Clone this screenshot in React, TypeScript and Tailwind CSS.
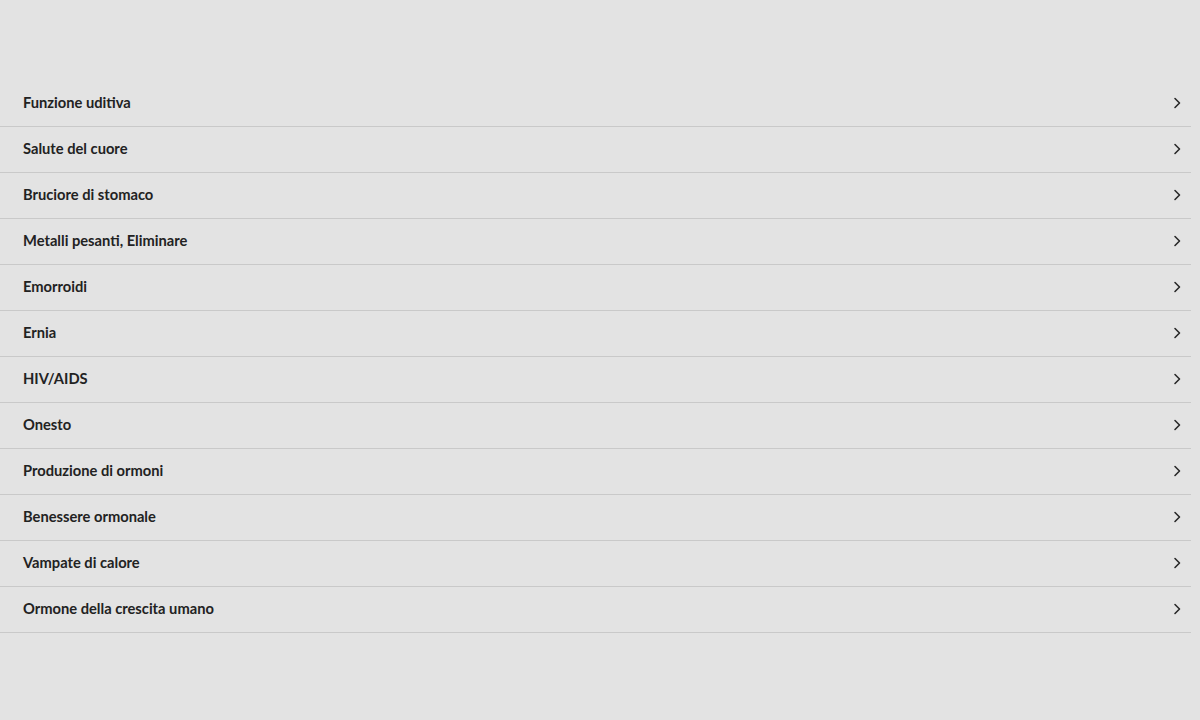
import React from "react";

const items = [
  "Funzione uditiva",
  "Salute del cuore",
  "Bruciore di stomaco",
  "Metalli pesanti, Eliminare",
  "Emorroidi",
  "Ernia",
  "HIV/AIDS",
  "Onesto",
  "Produzione di ormoni",
  "Benessere ormonale",
  "Vampate di calore",
  "Ormone della crescita umano",
];

export default function App() {
  return (
    <div
      className="w-[1200px] h-[720px] bg-[#e3e3e3] pt-[81px]"
      style={{ fontFamily: "Lato, 'Noto Sans', sans-serif" }}
    >
      <ul className="w-[1191px]">
        {items.map((t) => (
          <li
            key={t}
            className="h-[46px] flex items-center justify-between pl-[23px] pr-[9px] pb-[2px] border-b border-[#c9c9c9]"
          >
            <span className="text-[14.7px] font-bold text-[#222222]">{t}</span>
            <svg width="10" height="12" viewBox="0 0 10 12" fill="none">
              <path d="M3 1.5 L7.5 6 L3 10.5" stroke="#2a2a2a" strokeWidth="1.6" strokeLinecap="round" strokeLinejoin="round" />
            </svg>
          </li>
        ))}
      </ul>
    </div>
  );
}
